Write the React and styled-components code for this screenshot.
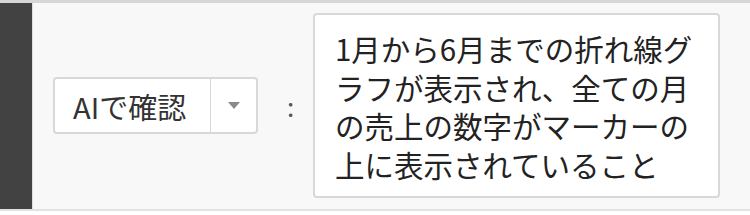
import styled, { createGlobalStyle } from "styled-components"

const Global = createGlobalStyle`
  html, body {
    margin: 0;
    padding: 0;
    background: #ffffff;
  }
  body {
    font-family: "Noto Sans CJK JP", "Noto Sans", sans-serif;
  }
`

const Row = styled.section`
  display: flex;
  height: 206px;
  border-top: 3px solid #d6d6d6;
  border-bottom: 2px solid #e2e2e2;
  background: #f8f8f8;
`

const Side = styled.div`
  width: 32px;
  flex-shrink: 0;
  background: #424242;
  border-right: 1px solid #dedede;
`

const Body = styled.div`
  display: flex;
  align-items: center;
  padding: 10px 0 11px 20px;
`

const Split = styled.div`
  display: flex;
  height: 57px;
  box-sizing: border-box;
  border: 2px solid #d8d8d8;
  border-radius: 4px;
  background: #ffffff;
`

const SplitMain = styled.button`
  width: 156px;
  box-sizing: border-box;
  border: none;
  border-right: 1px solid #d8d8d8;
  background: transparent;
  padding: 0 0 0 18px;
  text-align: left;
  font-family: inherit;
  font-size: 29px;
  color: #333333;
`

const SplitCaret = styled.button`
  width: 45px;
  border: none;
  background: transparent;
  display: flex;
  align-items: center;
  justify-content: center;
  padding: 0;
`

const Caret = styled.span`
  width: 0;
  height: 0;
  border-left: 6px solid transparent;
  border-right: 6px solid transparent;
  border-top: 7px solid #8a8a8a;
`

const Colon = styled.span`
  width: 55px;
  padding-left: 10px;
  box-sizing: border-box;
  text-align: center;
  font-size: 26px;
  color: #555555;
`

const Note = styled.div`
  width: 407px;
  height: 185px;
  box-sizing: border-box;
  padding: 14px 16px 14px 20px;
  border: 2px solid #d8d8d8;
  border-radius: 4px;
  background: #ffffff;
  font-size: 29.5px;
  line-height: 38.5px;
  color: #222222;
`

export default function App() {
  return (
    <>
      <Global />
      <Row>
        <Side />
        <Body>
          <Split>
            <SplitMain>AIで確認</SplitMain>
            <SplitCaret>
              <Caret />
            </SplitCaret>
          </Split>
          <Colon>:</Colon>
          <Note>1月から6月までの折れ線グラフが表示され、全ての月の売上の数字がマーカーの上に表示されていること</Note>
        </Body>
      </Row>
    </>
  )
}
